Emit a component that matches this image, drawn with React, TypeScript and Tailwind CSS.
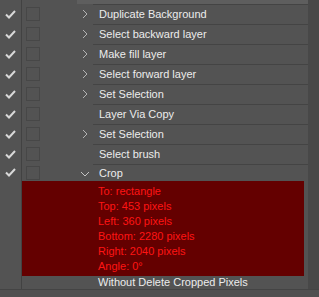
import React from 'react';

const rows = [
  { label: 'Duplicate Background', arrow: true },
  { label: 'Select backward layer', arrow: true },
  { label: 'Make fill layer', arrow: true },
  { label: 'Select forward layer', arrow: true },
  { label: 'Set Selection', arrow: true },
  { label: 'Layer Via Copy', arrow: false },
  { label: 'Set Selection', arrow: true },
  { label: 'Select brush', arrow: false },
];

const details = [
  'To: rectangle',
  'Top: 453 pixels',
  'Left: 360 pixels',
  'Bottom: 2280 pixels',
  'Right: 2040 pixels',
  'Angle: 0°',
];

const Check = () => (
  <svg width="11" height="9" viewBox="0 0 11 9" className="block">
    <path d="M1 4.5 L4 7.5 L10 1" fill="none" stroke="#d8d8d8" strokeWidth="2" />
  </svg>
);

const Box = () => <div className="w-[14px] h-[14px] border border-[#474747]" />;

const ChevronRight = () => (
  <svg width="6" height="10" viewBox="0 0 6 10" className="block">
    <path d="M1 1 L5 5 L1 9" fill="none" stroke="#b4b4b4" strokeWidth="1" />
  </svg>
);

const ChevronDown = () => (
  <svg width="10" height="6" viewBox="0 0 10 6" className="block">
    <path d="M1 1 L5 5 L9 1" fill="none" stroke="#c4c4c4" strokeWidth="1" />
  </svg>
);

const LeftCells = () => (
  <>
    <div className="w-[22px] shrink-0 flex items-center justify-center border-r border-[#424242] self-stretch">
      <Check />
    </div>
    <div className="w-[55px] shrink-0 flex items-center pl-[4px]">
      <Box />
    </div>
  </>
);

function Row({ label, arrow }: { label: string; arrow: boolean }) {
  return (
    <div className="h-[20px] flex">
      <LeftCells />
      <div className="flex-1 flex items-center">
        <div className="w-[16px] h-full flex items-center pl-[5px] shrink-0">{arrow && <ChevronRight />}</div>
        <div className="flex-1 h-full flex items-center pl-[6px] border-t border-[#444444] text-[#ececec]">{label}</div>
      </div>
    </div>
  );
}

export default function App() {
  return (
    <div
      className="w-[319px] h-[297px] bg-[#535353] flex flex-col overflow-hidden text-[11px] leading-none"
      style={{ fontFamily: '"Liberation Sans", Arial, sans-serif' }}
    >
      <div className="flex flex-1">
        <div className="w-[308px] flex flex-col">
          <div className="h-[4px] flex">
            <div className="w-[22px] border-r border-[#424242]" />
            <div className="w-[55px]" />
            <div className="flex-1 bg-[#5e5e5e]" />
          </div>
          {rows.map((r, i) => (
            <Row key={i} label={r.label} arrow={r.arrow} />
          ))}
          <div className="h-[17px] flex">
            <LeftCells />
            <div className="flex-1 flex items-center">
              <div className="w-[16px] h-full flex items-center pl-[3px] pt-[2px] shrink-0">
                <ChevronDown />
              </div>
              <div className="flex-1 h-full flex items-center pl-[6px] pt-[1px] border-t border-[#444444] text-[#ececec]">Crop</div>
            </div>
          </div>
          <div className="flex flex-1">
            <div className="w-[22px] shrink-0 border-r border-[#424242]" />
            <div className="flex-1 flex flex-col">
              <div className="w-[282px] bg-[#640000] pl-[76px] pt-[3px] pb-[2px] text-[#ff1414]">
                {details.map((d) => (
                  <div key={d} className="h-[15px] flex items-center">{d}</div>
                ))}
              </div>
              <div className="flex-1 flex items-center pl-[76px] text-[#ececec]">Without Delete Cropped Pixels</div>
            </div>
          </div>
        </div>
        <div className="flex-1 bg-[#484848]" />
      </div>
      <div className="h-[8px] border-t border-[#444444] bg-[#505050]" />
    </div>
  );
}
